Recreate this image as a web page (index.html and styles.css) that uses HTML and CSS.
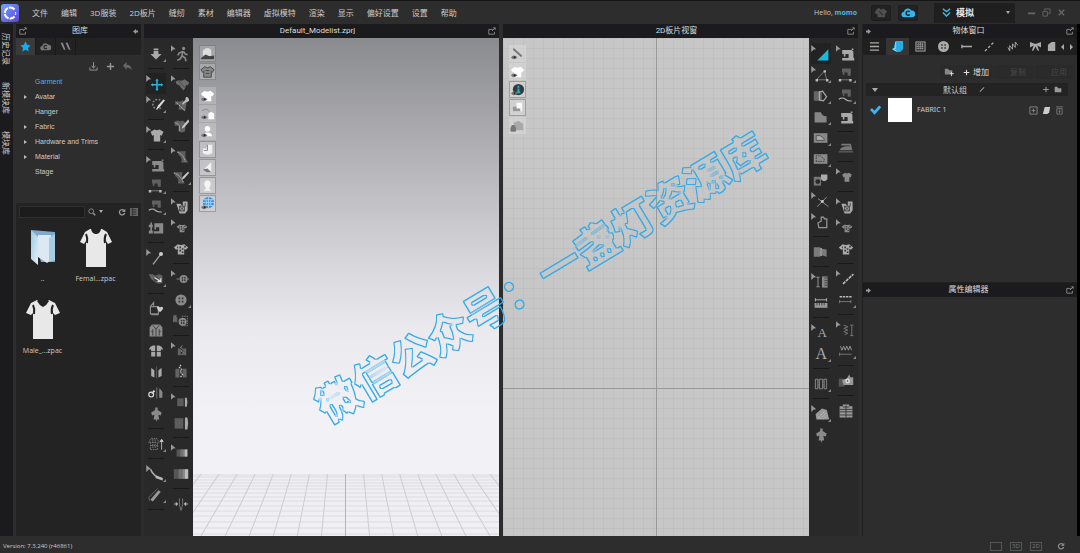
FILE: index.html
```html
<!DOCTYPE html>
<html lang="zh-CN">
<head>
  <meta charset="UTF-8" />
  <title>Default_Modelist.zprj</title>
  <link rel="stylesheet" href="styles.css">
</head>
<body>

<!-- shared icons -->
<svg class="sprite" aria-hidden="true">
  <symbol id="popout" viewBox="0 0 10 10"><path d="M6 3H1v6h7V6M5 5l4-4M6.500 1H9v2.500" fill="none" stroke="currentColor"/></symbol>
  <symbol id="arrow" viewBox="0 0 10 10"><path d="M0 3h4V0l6 5-6 5V7H0z" fill="currentColor"/></symbol>
  <symbol id="plus" viewBox="0 0 10 10"><path d="M5 1v8M1 5h8" stroke="currentColor" stroke-width="1.500"/></symbol>
  <symbol id="cloud" viewBox="0 0 20 16"><path d="M5 15a4 4 0 0 1-1-8 6 6 0 0 1 11-2 5 5 0 0 1 1 10z" fill="currentColor"/><path d="M12.500 7a3 3 0 1 0 0 4" fill="none" stroke="#222" stroke-width="2"/></symbol>
  <symbol id="refresh" viewBox="0 0 12 12"><path d="M9 3.500a4 4 0 1 0 1 4" fill="none" stroke="currentColor" stroke-width="2"/><path d="M11 1v5H6z" fill="currentColor"/></symbol>
  <symbol id="folder" viewBox="0 0 12 10"><path d="M1 1h4l1 2h5v6H1z" fill="currentColor"/></symbol>
  <symbol id="eye" viewBox="0 0 16 16"><path d="M1 12q3-4 7 0-4 4-7 0z" fill="#777"/><circle cx="5" cy="12" r="1" fill="#222"/></symbol>

  <symbol id="down" viewBox="0 0 20 20"><path d="M7 3h6v2H7zM7 6h6v4h4l-7 7-7-7h4z" fill="currentColor"/></symbol>
  <symbol id="walk" viewBox="0 0 20 20"><circle cx="12" cy="3" r="2" fill="currentColor"/><path d="M11 6l-1 6 4 3 1 4M10 12l-2 4-4 2M10 7L6 9l-1 3M12 7l2 3 3 1" fill="none" stroke="currentColor" stroke-width="2"/></symbol>
  <symbol id="move" viewBox="0 0 20 20"><path d="M10 5v12M4 11h12" stroke="#27b5dc" stroke-width="2"/><path d="M8 6l2-3 2 3zM8 16l2 3 2-3zM5 9l-3 2 3 2zM15 9l3 2-3 2z" fill="#27b5dc"/></symbol>
  <symbol id="lasso" viewBox="0 0 20 20"><path d="M14 4a6 6 0 1 0 2 8" fill="none" stroke="currentColor" stroke-width="2" stroke-dasharray="2 2"/><path d="M18 3l-7 8-2 5 4-3 7-9z" fill="#ddd"/></symbol>
  <symbol id="shirt" viewBox="0 0 20 20"><path d="M7 3q3 2 6 0l5 3-2 5-2-1v8H6v-8l-2 1-2-5z" fill="currentColor"/></symbol>
  <symbol id="heart" viewBox="0 0 20 20"><path d="M6 5q4 2 7-1l6 4-2 4-2-1q0 4-3 7-3-2-5-6l-4-2-1-3z" fill="currentColor" opacity=".7"/><path d="M4 4l12 13" stroke="#282828" stroke-dasharray="2 1"/></symbol>
  <symbol id="shirtpin" viewBox="0 0 20 20"><path d="M5 5q4 2 7-1l5 4-2 10q-3-3-8-2l1-6-6-1z" fill="currentColor" opacity=".6"/><path d="M3 6l12 11" stroke="#ccc" stroke-dasharray="2 1"/><path d="M19 1l-7 8M17 1l3 3-4 2z" stroke="#bbb" stroke-width="2" fill="#bbb"/></symbol>
  <symbol id="shirtpen" viewBox="0 0 20 20"><path d="M1 5l5-2q3 2 6 0l4 3-1 11q-4 2-8 0V9L3 10z" fill="currentColor" opacity=".6"/><path d="M3 6q7 2 5 10" fill="none" stroke="#aaa"/><path d="M19 2l-7 8-1 3 3-1 7-8z" fill="#c5c5c5"/></symbol>
  <symbol id="sew" viewBox="0 0 20 20"><path d="M4 5h12l2 2v8h1v3H4v-3h8v-5H8v3H6v-3H4zM16 3h2v2h-2z" fill="currentColor"/></symbol>
  <symbol id="sewseg" viewBox="0 0 20 20"><path d="M5 2h11v9h-4V7H8v3H6V7H5z" fill="#606060"/><path d="M3 16h13" stroke="currentColor"/><path d="M1 15h3v3H1zM14 15h3v3h-3z" fill="#bbb"/></symbol>
  <symbol id="sewfree" viewBox="0 0 20 20"><path d="M5 2h11v9h-4V7H8v3H6V7H5z" fill="#606060"/><path d="M1 14q5-3 8 0t8 2" fill="none" stroke="#bbb" stroke-width="1.500"/></symbol>
  <symbol id="sewmulti" viewBox="0 0 20 20"><path d="M8 4h11v13H7v-3h7V9h-4v3H8zM1 6h5v3H1zM1 13h5v4H1zM3 3h2v14H3z" fill="currentColor"/></symbol>
  <symbol id="pin" viewBox="0 0 20 20"><path d="M5 18L15 5" stroke="#aaa" stroke-width="1.500"/><circle cx="15" cy="5" r="2.500" fill="#ccc"/></symbol>
  <symbol id="drag" viewBox="0 0 20 20"><path d="M1 4h5l3 2 5-2 4 2v9l-5 1-4-2-5-4z" fill="currentColor" opacity=".6"/><circle cx="10" cy="10" r="3" fill="#444"/><path d="M8 8l8 5M16 9v4h-4" stroke="#ddd" fill="none" stroke-width="1.500"/></symbol>
  <symbol id="unfold" viewBox="0 0 20 20"><path d="M3 7h10v9H3zM3 7l4-5v4M4 17h9" fill="none" stroke="currentColor" stroke-width="1.500"/><path d="M11 8q2-2 4 0 3-2 4 1-1 3-4 5-3-2-4-6z" fill="#ccc"/></symbol>
  <symbol id="vest" viewBox="0 0 20 20"><path d="M5 3h10l3 4v11H2V7z" fill="currentColor"/><path d="M6 4l4 5 4-5M6 9v8M10 9v9M14 9v8M4 12h2M14 12h2" stroke="#333" fill="none"/></symbol>
  <symbol id="pieces" viewBox="0 0 20 20"><path d="M6 3h3v7H4V8H1q1-4 5-5zM11 3h3q4 1 5 5h-3v2h-5zM4 11h5v6H4zM11 11h5v6h-5z" fill="#a8a8a8"/></symbol>
  <symbol id="panels" viewBox="0 0 20 20"><path d="M4 5q2 1 4 3v9l-4-2zM17 5q-2 1-4 3v9l4-2z" fill="#aaa"/><path d="M10.500 3v15" stroke="#666"/></symbol>
  <symbol id="mirror" viewBox="0 0 20 20"><path d="M14 4q3 2 4 5v7h-4z" fill="#888"/><path d="M11 3v14" stroke="#888"/><circle cx="4" cy="12" r="3" fill="none" stroke="#ddd" stroke-width="1.500"/><path d="M4 12l3-6 2 2z" fill="#ddd"/></symbol>
  <symbol id="dress" viewBox="0 0 20 20"><path d="M9 2h3v3l5 3-1 4-3-1 1 6h-3v2h-1v-2H7l1-6-3 1-1-4 5-3z" fill="currentColor"/></symbol>
  <symbol id="coat" viewBox="0 0 20 20"><path d="M4 3h7l3 5-2 1v8H3v-8L1 8zM6 4v12M9 4v12M2 8h10M4 12h8" fill="none" stroke="currentColor" stroke-dasharray="2 1"/><path d="M17 5v12M15 7l2-3 2 3z" stroke="#ccc" fill="#ccc"/></symbol>
  <symbol id="curve" viewBox="0 0 20 20"><path d="M2 4q3 9 15 12" fill="none" stroke="#aaa" stroke-width="2"/><path d="M9 12l8 3v3l-9-3z" fill="#bbb"/></symbol>
  <symbol id="tape" viewBox="0 0 20 20"><path d="M3 16L13 4l3 2L6 18z" fill="#999"/><path d="M2 17l-1-4L12 2" fill="none" stroke="#777"/></symbol>
  <symbol id="bend" viewBox="0 0 20 20"><path d="M4 4h11q-3 7 3 14H9q2-6-3-9z" fill="currentColor" opacity=".55"/><path d="M4 5q8 3 10 12" stroke="#ccc" fill="none" stroke-dasharray="2 1"/></symbol>
  <symbol id="bendpen" viewBox="0 0 20 20"><path d="M1 4h11q-3 7 3 14H6q2-6-3-9z" fill="currentColor" opacity=".55"/><path d="M1 5q9 3 12 12" stroke="#ccc" fill="none" stroke-dasharray="2 1"/><path d="M19 3l-7 7-1 3 3-1 6-7z" fill="#ccc"/></symbol>
  <symbol id="texture" viewBox="0 0 20 20"><path d="M3 6h5l3 3V3h6v11l-3 4H7z" fill="currentColor"/><path d="M7 9h6v6H7zM7 9l6 6M13 9l-6 6M14 5v4" stroke="#333" fill="none"/></symbol>
  <symbol id="print" viewBox="0 0 20 20"><path d="M6 4q4 2 8 0l5 4-3 3-2-1v7H6v-7l-2 1-3-3z" fill="currentColor"/><path d="M8 7h2v2H8zM11 9h2v2h-2zM8 11h2v2H8zM11 13h2v2h-2zM5 7h1v2H5zM14 6h2v2h-2z" fill="#333"/></symbol>
  <symbol id="button" viewBox="0 0 20 20"><circle cx="10" cy="10" r="7" fill="currentColor"/><path d="M7 7h2v2H7zM11 7h2v2h-2zM7 11h2v2H7zM11 11h2v2h-2z" fill="#333"/></symbol>
  <symbol id="buttonline" viewBox="0 0 20 20"><path d="M3 10h16" stroke="currentColor"/><circle cx="12" cy="10" r="5" fill="currentColor"/><path d="M10 8h1v1h-1zM13 8h1v1h-1zM10 11h1v1h-1zM13 11h1v1h-1z" stroke="#333" fill="#333"/></symbol>
  <symbol id="buttonlock" viewBox="0 0 20 20"><path d="M0 6h5v5H0zM1 6V3h3v3" fill="#666" stroke="#666"/><path d="M11 4h7v12h-7" fill="none" stroke="currentColor" stroke-dasharray="2 1"/><circle cx="12" cy="11" r="5" fill="currentColor"/><path d="M10 9h1v1h-1zM13 9h1v1h-1zM10 12h1v1h-1zM13 12h1v1h-1z" stroke="#333"/></symbol>
  <symbol id="zip" viewBox="0 0 20 20"><path d="M3 6h5v11H3zM12 6h5v11h-5z" fill="currentColor" opacity=".6"/><path d="M10 1l-2 3 3 3-2 3 3 3-3 4" stroke="#ccc" fill="none" stroke-width="1.500" stroke-dasharray="2 1"/></symbol>
  <symbol id="roll" viewBox="0 0 20 20"><path d="M2 4h11v13H2z" fill="#5c5c5c"/><path d="M13 4h2v13h-2z" fill="#333"/><path d="M15 3h3q2 7 0 15h-3z" fill="#aaa"/></symbol>
  <symbol id="flat" viewBox="0 0 20 20"><path d="M1 4h18v12H1z" fill="#565656"/><path d="M7 4h5v12H7z" fill="#707070"/><path d="M12 4h3v12h-3z" fill="#8a8a8a"/><path d="M15 4h4v12h-4z" fill="#bbb"/></symbol>
  <symbol id="gather" viewBox="0 0 20 20"><path d="M1 10h4M19 10h-4M4 8l2 2-2 2zM16 8l-2 2 2 2z" fill="#bbb" stroke="#bbb"/><path d="M8 3v8l2 7 2-7V3" fill="none" stroke="#888"/></symbol>
  <symbol id="tri" viewBox="0 0 20 20"><path d="M18 4v14H4z" fill="#17b9dc"/></symbol>
  <symbol id="edit" viewBox="0 0 20 20"><path d="M3 16h13L13 5z" fill="none" stroke="#888"/><path d="M2 15h3v3H2zM15 15h3v3h-3zM12 4h3v3h-3z" fill="#bbb"/></symbol>
  <symbol id="polygon" viewBox="0 0 20 20"><path d="M1 4h10v12H1z" fill="#666"/><path d="M8 15V5l4-1 5 7-4 5z" fill="none" stroke="#aaa" stroke-width="1.500"/></symbol>
  <symbol id="shape" viewBox="0 0 20 20"><path d="M2 4h8q1 5 7 5v8H2z" fill="#858585"/></symbol>
  <symbol id="dart" viewBox="0 0 20 20"><path d="M1 4h17v12H1z" fill="#888"/><path d="M4 13V7h5l5 4v2z" fill="#aaa" stroke="#444"/></symbol>
  <symbol id="inner" viewBox="0 0 20 20"><path d="M1 4h17v12H1z" fill="#8a8a8a"/><path d="M4 13V6h5l5 4v3z" fill="none" stroke="#333" stroke-dasharray="2 1"/></symbol>
  <symbol id="trace" viewBox="0 0 20 20"><path d="M1 6h9v11H1z" fill="#777"/><circle cx="6" cy="12" r="3" fill="#292929"/><path d="M10 3h8v6q-4 5-8 0z" fill="#aaa"/></symbol>
  <symbol id="cross" viewBox="0 0 20 20"><path d="M4 17L16 5M5 7l13 10" stroke="#aaa"/><path d="M9 9h3v3H9z" fill="#ddd"/></symbol>
  <symbol id="outline" viewBox="0 0 20 20"><path d="M6 17l-1-6 4-2V4h3l1 2h3v11z" fill="none" stroke="#999" stroke-width="1.500"/></symbol>
  <symbol id="seam" viewBox="0 0 20 20"><path d="M1 4h8v12H1zM11 6l6 1v9l-6-2z" fill="#7b7b7b"/><path d="M9 5h2v10H9z" fill="#aaa"/></symbol>
  <symbol id="rulerv" viewBox="0 0 20 20"><path d="M5 4v12M3 4h4M3 16h4" stroke="#aaa"/><path d="M10 3h7v14h-7z" fill="#888"/><path d="M13 5h4M13 8h4M13 11h4M13 14h4" stroke="#333"/></symbol>
  <symbol id="rulerh" viewBox="0 0 20 20"><path d="M3 6h14M3 4v4M17 4v4" stroke="#ccc"/><path d="M2 10h16v6H2z" fill="#999"/><path d="M5 10v3M8 10v3M11 10v3M14 10v3" stroke="#333"/></symbol>
  <symbol id="stitch" viewBox="0 0 20 20"><path d="M5 16L18 4" stroke="#bbb" stroke-width="2" stroke-dasharray="4 1"/></symbol>
  <symbol id="stitchh" viewBox="0 0 20 20"><path d="M2 6h16" stroke="#bbb" stroke-width="2" stroke-dasharray="3 1"/><path d="M2 12h14M2 10v4M16 10v4" stroke="#888"/></symbol>
  <symbol id="zigv" viewBox="0 0 20 20"><path d="M6 4l5 2-5 2 5 2-5 2 5 2-4 2M16 4v13M14 4h4M14 17h4" fill="none" stroke="#888"/></symbol>
  <symbol id="zigh" viewBox="0 0 20 20"><path d="M3 4l2 5 2-5 2 5 2-5 2 5 2-5 2 5" fill="none" stroke="#aaa"/><path d="M2 14h15M2 12v4" stroke="#888"/></symbol>
  <symbol id="pleat" viewBox="0 0 20 20"><path d="M3 4h3v12H3zM14 4h3v12h-3zM8 4h4v12H8z" fill="none" stroke="#999"/><path d="M7 4v12M13 4v12" stroke="#777" stroke-dasharray="2 1"/></symbol>
  <symbol id="iron" viewBox="0 0 20 20"><path d="M4 6h12l2 8H2q1-4 8-5h5l-1-1H4z" fill="#777"/><path d="M1 16h18" stroke="#555" stroke-width="2"/></symbol>
  <symbol id="photo" viewBox="0 0 20 20"><path d="M1 7h7v10H1z" fill="#555"/><path d="M5 9l6-2 3-5 2 4 3-1v10H7z" fill="#999"/><circle cx="12" cy="10" r="3" fill="#ddd"/><circle cx="12" cy="10" r="1" fill="#333"/></symbol>
  <symbol id="grading" viewBox="0 0 20 20"><path d="M6 2h8v2h4v14H2V4h4z" fill="#999"/><path d="M10 3v15M2 8h16M2 11h16M2 15h16M6 5h8" stroke="#292929"/></symbol>
  <symbol id="mesh" viewBox="0 0 20 20"><path d="M2 10l8-7 6 2 3 12H3z" fill="#999"/><path d="M5 15l9-9M8 16l8-8M12 16l5-4" stroke="#eee" stroke-dasharray="1 2"/></symbol>
</svg>

<header class="menubar">
  <svg class="logo" viewBox="0 0 18 18"><defs><linearGradient id="lg" x2="1" y2="1"><stop stop-color="#72a6ff"/><stop offset="1" stop-color="#5d43d4"/></linearGradient></defs><rect width="18" height="18" rx="3" fill="url(#lg)"/><path d="M13.500 5.500a5.500 5.500 0 1 0 0 7" fill="none" stroke="#fff" stroke-width="2" stroke-dasharray="6 1"/><path d="M14 8l1 1-1 2" fill="none" stroke="#fff"/></svg>
  <nav class="menu">
    <a href="#">文件</a><a href="#">编辑</a><a href="#">3D服装</a><a href="#">2D板片</a><a href="#">缝纫</a><a href="#">素材</a><a href="#">编辑器</a><a href="#">虚拟模特</a><a href="#">渲染</a><a href="#">显示</a><a href="#">偏好设置</a><a href="#">设置</a><a href="#">帮助</a>
  </nav>
  <span class="hello">Hello, <a href="#">momo</a></span>
  <button class="top-btn dim" aria-label="商店"><svg viewBox="0 0 20 16"><path d="M3 4l4-3 3 3 4-2 5 5-3 3v5H5v-4L1 9z" fill="currentColor"/><path d="M7 6l6 6" stroke="#333" stroke-width="2"/></svg></button>
  <button class="top-btn cloud" aria-label="云"><svg><use href="#cloud"/></svg></button>
  <div class="simulate">
    <button class="sim-main"><svg viewBox="0 0 10 10"><path d="M1 1l4 3 4-3M1 5l4 4 4-4" fill="none" stroke="#3fb9f0" stroke-width="1.500"/></svg>模拟</button>
    <button class="sim-more" aria-label="模拟选项"><i class="caret"></i></button>
  </div>
  <div class="win-btns">
    <button aria-label="最小化"><svg viewBox="0 0 10 10"><path d="M1 6h8" stroke="currentColor" stroke-width="2"/></svg></button>
    <button aria-label="还原"><svg viewBox="0 0 10 10"><path d="M3 3V1h6v5H7M1 4h5v5H1z" fill="none" stroke="currentColor"/></svg></button>
    <button aria-label="关闭"><svg viewBox="0 0 10 10"><path d="M2 2l6 6M8 2L2 8" stroke="currentColor" stroke-width="1.500"/></svg></button>
  </div>
</header>

<main class="workspace">
  <nav class="side-tabs"><a href="#">历史记录</a><a href="#">新模块库</a><a href="#">模块库</a></nav>

  <aside class="library">
    <div class="title-bar"><svg><use href="#popout"/></svg><h2>图库</h2><svg class="flip"><use href="#arrow"/></svg></div>
    <div class="lib-tabs">
      <button class="active" aria-label="收藏"><svg viewBox="0 0 20 20"><path d="M10 1l3 6 6 1-4.500 4.500L16 19l-6-3-6 3 1.500-6.500L1 8l6-1z" fill="#10aef2"/></svg></button>
      <button aria-label="云素材"><svg><use href="#cloud"/></svg></button>
      <button aria-label="商城"><svg viewBox="0 0 20 20"><path d="M1 3h4l5 13H7zM10 3h4l5 13h-3z" fill="#888"/></svg></button>
    </div>
    <div class="lib-tools">
      <button aria-label="下载"><svg viewBox="0 0 10 10"><path d="M1 6v3h8V6M5 0v6M3 4l2 3 2-3" fill="none" stroke="currentColor"/></svg></button>
      <button aria-label="添加"><svg><use href="#plus"/></svg></button>
      <button class="dim" aria-label="返回"><svg viewBox="0 0 10 10"><path d="M0 4l4-4v3q5 0 6 6-2-3-6-3v3z" fill="currentColor"/></svg></button>
    </div>
    <ul class="tree">
      <li class="current"><a href="#">Garment</a></li>
      <li class="parent"><a href="#">Avatar</a></li>
      <li><a href="#">Hanger</a></li>
      <li class="parent"><a href="#">Fabric</a></li>
      <li class="parent"><a href="#">Hardware and Trims</a></li>
      <li class="parent"><a href="#">Material</a></li>
      <li><a href="#">Stage</a></li>
    </ul>
    <div class="browser">
      <div class="search">
        <input type="text" aria-label="搜索">
        <button aria-label="搜索"><svg viewBox="0 0 10 10"><path d="M6.500 6.500L9 9" stroke="currentColor" stroke-width="2"/><circle cx="4" cy="4" r="3" fill="none" stroke="currentColor"/></svg><i class="caret"></i></button>
        <button class="reload" aria-label="刷新"><svg><use href="#refresh"/></svg></button>
        <button aria-label="列表"><svg viewBox="0 0 10 10"><path d="M0 0h10v10H0z" fill="#666"/><path d="M2 2h6M2 4h6M2 6h6M2 8h6M3 0v10" stroke="#333"/></svg></button>
      </div>
      <div class="files">
        <a href="#"><svg viewBox="0 0 36 42"><defs><linearGradient id="fg" x2="1" y2="1"><stop stop-color="#9ccbe8"/><stop offset="1" stop-color="#e3f0f8"/></linearGradient></defs><path d="M6 4l24 2v30H16z" fill="#7fa9cd"/><path d="M13 9h13v25l-4 3-9-6z" fill="#dce9f2"/><path d="M6 4l7 7v28L6 33z" fill="url(#fg)"/><path d="M24 12l6-4v26l-6 2z" fill="#a5cde6"/></svg><span>..</span></a>
        <a href="#"><svg viewBox="0 0 36 42"><path d="M12 3h12l5 3 5 10-4 2-2-3v26H8V15l-2 3-4-2 5-10z" fill="#e8e8e8"/><path d="M13 3q1-2 5-2t5 2q-1 5-5 5t-5-5z" fill="#222"/><path d="M8 8q2 4 1 9M28 8q-2 4-1 9" stroke="#222" stroke-width="2" fill="none"/></svg><span>Femal...zpac</span></a>
        <a href="#"><svg viewBox="0 0 36 42"><path d="M12 2h12l6 3 5 10-5 2-2-2v26H8V15l-2 2-5-2 5-10z" fill="#e8e8e8"/><path d="M12 3q1-2 6-2t6 2q-2 4-6 6-4-2-6-6z" fill="#222"/><path d="M8 7q2 4 1 9M28 7q-2 4-1 9" stroke="#222" stroke-width="2" fill="none"/></svg><span>Male_...zpac</span></a>
      </div>
    </div>
  </aside>

  <section class="window">
    <div class="title-bar"><h2>Default_Modelist.zprj</h2><svg><use href="#popout"/></svg></div>
    <div class="window-body">
      <div class="tools">
        <div class="tool-col">
          <button class="more" aria-label="模拟"><svg class="bright"><use href="#down"/></svg></button><hr>
          <button class="pick on" aria-label="选择移动"><svg><use href="#move"/></svg></button>
          <button class="pick more" aria-label="选择网格"><svg><use href="#lasso"/></svg></button><hr>
          <button class="pick more" aria-label="折叠安排"><svg class="bright"><use href="#shirt"/></svg></button><hr>
          <button class="pick" aria-label="编辑缝纫线"><svg><use href="#sew"/></svg></button>
          <button class="more" aria-label="线缝纫"><svg><use href="#sewseg"/></svg></button>
          <button class="more" aria-label="自由缝纫"><svg><use href="#sewfree"/></svg></button>
          <button aria-label="多段缝纫"><svg><use href="#sewmulti"/></svg></button><hr>
          <button class="pick" aria-label="固定针"><svg><use href="#pin"/></svg></button>
          <button class="more" aria-label="假缝"><svg><use href="#drag"/></svg></button><hr>
          <button aria-label="展开"><svg><use href="#unfold"/></svg></button>
          <button aria-label="重置安排"><svg><use href="#vest"/></svg></button>
          <button aria-label="板片"><svg><use href="#pieces"/></svg></button>
          <button aria-label="对称"><svg><use href="#panels"/></svg></button>
          <button aria-label="镜像"><svg><use href="#mirror"/></svg></button>
          <button aria-label="着装"><svg><use href="#dress"/></svg></button><hr>
          <button class="more" aria-label="提高服装品质"><svg><use href="#coat"/></svg></button><hr>
          <button class="pick more" aria-label="曲线测量"><svg><use href="#curve"/></svg></button>
          <button class="more" aria-label="胶带"><svg><use href="#tape"/></svg></button><hr>
        </div>
        <div class="tool-col">
          <button class="pick" aria-label="姿势"><svg><use href="#walk"/></svg></button><hr>
          <button class="pick" aria-label="编辑造型线"><svg><use href="#heart"/></svg></button>
          <button aria-label="造型线"><svg><use href="#shirtpin"/></svg></button>
          <button aria-label="画笔"><svg><use href="#shirtpen"/></svg></button><hr>
          <button class="pick" aria-label="编辑线段"><svg><use href="#bend"/></svg></button>
          <button class="more" aria-label="线段"><svg><use href="#bendpen"/></svg></button><hr>
          <button class="pick" aria-label="编辑纹理"><svg class="bright"><use href="#texture"/></svg></button>
          <button class="pick" aria-label="调整贴图"><svg class="small"><use href="#print"/></svg></button>
          <button aria-label="贴图"><svg class="bright"><use href="#print"/></svg></button><hr>
          <button class="pick" aria-label="移动纽扣"><svg><use href="#buttonline"/></svg></button>
          <button class="more" aria-label="纽扣"><svg><use href="#button"/></svg></button>
          <button aria-label="系纽扣"><svg><use href="#buttonlock"/></svg></button><hr>
          <button class="pick" aria-label="编辑拉链"><svg class="small"><use href="#zip"/></svg></button>
          <button aria-label="拉链"><svg><use href="#zip"/></svg></button><hr>
          <button class="pick" aria-label="编辑嵌条"><svg class="small"><use href="#roll"/></svg></button>
          <button aria-label="嵌条"><svg><use href="#roll"/></svg></button><hr>
          <button class="pick" aria-label="编辑滚边"><svg class="small"><use href="#flat"/></svg></button>
          <button aria-label="滚边"><svg><use href="#flat"/></svg></button><hr>
          <button aria-label="抽褶"><svg><use href="#gather"/></svg></button>
        </div>
      </div>
      <div class="view view-3d">
        <svg class="floor" viewBox="0 0 305 62" preserveAspectRatio="none">
          <path d="M0 1h305M0 3h305M0 6h305M0 9h305M0 12h305M0 15h305M0 19h305M0 23h305M0 27h305M0 32h305M0 37h305M0 42h305M0 48h305M0 54h305M0 60h305" stroke="#dcdce0"/>
          <path d="M8 0L-40 62M26 0L-16 62M44 0L8 62M62 0L32 62M80 0L56 62M98 0L80 62M116 0L104 62M134 0L128 62M170 0L176 62M188 0L200 62M206 0L224 62M224 0L248 62M242 0L272 62M260 0L296 62M278 0L320 62M296 0L344 62" stroke="#cdcdd1" fill="none"/>
          <path d="M152 0v62" stroke="#b5b5b8"/>
        </svg>
        <div class="view-btns">
          <button class="framed" aria-label="显示场景"><svg viewBox="0 0 16 16"><path d="M3 10V5q2-3 5-3t4 3v6z" fill="#ddd"/><path d="M1 13l5-4 4 2 5-1v4H1z" fill="#444"/></svg></button>
          <button class="framed gap" aria-label="显示服装"><svg viewBox="0 0 16 16"><path d="M5 3q3 2 6 0l4 3-2 3-1-1v6H4V8L3 9 1 6z" fill="#888" stroke="#444"/><path d="M6 7h4M6 10h4" stroke="#444"/></svg></button>
          <button aria-label="服装"><svg viewBox="0 0 16 16"><path d="M5 3q3 2 6 0l4 3-2 3-1-1v6H4V8L3 9 1 6z" fill="#fff"/><use href="#eye" width="16" height="16"/></svg></button>
          <button aria-label="附件"><svg viewBox="0 0 16 16"><path d="M2 5l5-2 3 3" stroke="#888" fill="none"/><path d="M9 8l3-2 3 2v6H9z" fill="#fff"/><use href="#eye" width="16" height="16"/></svg></button>
          <button aria-label="虚拟模特"><svg viewBox="0 0 16 16"><circle cx="8" cy="5" r="3" fill="#fff"/><path d="M4 13q0-4 4-4t5 4z" fill="#fff"/><use href="#eye" width="16" height="16"/></svg></button>
          <button class="framed" aria-label="板片"><svg viewBox="0 0 16 16"><path d="M3 7h4l1-4h5v9q-5 3-10 0z" fill="#f1f1f1"/><path d="M8 3v6H4" fill="none" stroke="#888"/></svg></button>
          <button class="framed" aria-label="厚度"><svg viewBox="0 0 16 16"><path d="M5 9l7-7v11H6z" fill="#f2f2f2"/><path d="M3 10l5-1 4 4H7z" fill="#777"/></svg></button>
          <button class="framed" aria-label="头部"><svg viewBox="0 0 16 16"><path d="M4 6q0-4 4-4t4 4q0 3-2 5l3 3H3l3-3q-2-2-2-5z" fill="#f4f4f4" stroke="#ccc"/></svg></button>
          <button class="framed" aria-label="环境"><svg viewBox="0 0 16 16"><circle cx="9" cy="7" r="6" fill="#3f8fdc"/><path d="M3 7h12M9 1v12M5 3q4 4 0 8M13 3q-4 4 0 8M4 4h10M4 10h10" stroke="#9fd4fa" fill="none"/><use href="#eye" width="16" height="16"/></svg></button>
        </div>
      </div>
    </div>
  </section>

  <section class="window">
    <div class="title-bar"><h2>2D板片视窗</h2><svg><use href="#popout"/></svg></div>
    <div class="window-body">
      <div class="view view-2d">
        <div class="view-btns">
          <button aria-label="线"><svg viewBox="0 0 16 16"><path d="M4 2l9 8-1 2-9-8z" fill="#777"/><use href="#eye" width="16" height="16"/></svg></button>
          <button aria-label="板片"><svg viewBox="0 0 16 16"><path d="M5 3q3 2 6 0l4 3-2 3-1-1v6H4V8L3 9 1 6z" fill="#fff"/><use href="#eye" width="16" height="16"/></svg></button>
          <button class="framed" aria-label="信息"><svg viewBox="0 0 16 16"><circle cx="9" cy="8" r="6" fill="#333b40"/><path d="M9 4v2M9 7v4M7 11h4" stroke="#19b8c6" stroke-width="2"/><use href="#eye" width="16" height="16"/></svg></button>
          <button class="framed" aria-label="纹理"><svg viewBox="0 0 16 16"><path d="M3 7h4V3h6v9H3z" fill="#fafafa"/><path d="M3 7h4v2h4v3H3z" fill="#999"/></svg></button>
          <button aria-label="锁定"><svg viewBox="0 0 16 16"><path d="M4 5l5-2 5 3v7H6z" fill="#aaa"/><path d="M1 10h5v4H1zM2 10V8h3v2" fill="#777" stroke="#777"/></svg></button>
        </div>
      </div>
      <div class="tools">
        <div class="tool-col">
          <button class="pick on" aria-label="调整板片"><svg><use href="#tri"/></svg></button>
          <button class="pick more" aria-label="编辑板片"><svg><use href="#edit"/></svg></button>
          <button class="more" aria-label="多边形"><svg><use href="#polygon"/></svg></button>
          <button class="more" aria-label="延展"><svg><use href="#shape"/></svg></button>
          <button class="more" aria-label="内部多边形"><svg><use href="#dart"/></svg></button>
          <button class="more" aria-label="基础线"><svg><use href="#inner"/></svg></button>
          <button aria-label="省"><svg><use href="#trace"/></svg></button>
          <button class="pick" aria-label="勾勒"><svg><use href="#cross"/></svg></button>
          <button class="pick" aria-label="轮廓"><svg><use href="#outline"/></svg></button><hr>
          <button aria-label="缝份"><svg><use href="#seam"/></svg></button><hr>
          <button class="pick" aria-label="编辑标尺"><svg><use href="#rulerv"/></svg></button>
          <button aria-label="标尺"><svg><use href="#rulerh"/></svg></button><hr>
          <button class="pick letter" aria-label="编辑注释">A</button>
          <button class="more letter big" aria-label="注释">A</button><hr>
          <button class="more" aria-label="褶裥"><svg><use href="#pleat"/></svg></button><hr>
          <button class="pick more" aria-label="绗缝"><svg><use href="#mesh"/></svg></button>
          <button aria-label="填充"><svg><use href="#dress"/></svg></button>
        </div>
        <div class="tool-col">
          <button class="pick" aria-label="编辑缝纫"><svg class="bright"><use href="#sew"/></svg></button>
          <button class="more" aria-label="线缝纫"><svg><use href="#sewseg"/></svg></button>
          <button class="more" aria-label="自由缝纫"><svg><use href="#sewfree"/></svg></button>
          <button aria-label="检查缝纫"><svg class="bright"><use href="#sew"/></svg></button><hr>
          <button aria-label="归拔"><svg><use href="#iron"/></svg></button><hr>
          <button class="pick" aria-label="编辑服装"><svg class="small"><use href="#shirt"/></svg></button><hr>
          <button class="pick" aria-label="编辑纹理"><svg class="bright"><use href="#texture"/></svg></button>
          <button class="pick" aria-label="调整贴图"><svg class="small"><use href="#print"/></svg></button>
          <button aria-label="贴图"><svg class="bright"><use href="#print"/></svg></button><hr>
          <button class="pick" aria-label="编辑明线"><svg><use href="#stitch"/></svg></button>
          <button class="more" aria-label="明线"><svg><use href="#stitchh"/></svg></button><hr>
          <button class="pick" aria-label="编辑缝纫褶皱"><svg><use href="#zigv"/></svg></button>
          <button class="more" aria-label="缝纫褶皱"><svg><use href="#zigh"/></svg></button><hr>
          <button aria-label="图片"><svg><use href="#photo"/></svg></button><hr>
          <button aria-label="放码"><svg><use href="#grading"/></svg></button>
        </div>
      </div>
    </div>
  </section>

  <aside class="props">
    <section class="objects">
      <div class="title-bar"><svg class="small-arrow"><use href="#arrow"/></svg><h2>物体窗口</h2><svg><use href="#popout"/></svg></div>
      <div class="obj-tabs">
        <button aria-label="场景"><svg viewBox="0 0 12 12"><path d="M1 2h10M1 6h10M1 10h10" stroke="currentColor" stroke-width="1.500"/></svg></button>
        <button class="active" aria-label="织物"><svg viewBox="0 0 12 12"><path d="M4 0h8v9l-3 3H5L0 9l2-2z" fill="#25aee5"/><path d="M4 1v7l-3 1 4 2" fill="none" stroke="#9be0ff"/></svg></button>
        <button aria-label="贴图"><svg viewBox="0 0 12 12"><rect x="1" y="1" width="10" height="10" fill="#333" stroke="#aaa"/><path d="M2 4h8M2 8h8M4 2v8M8 2v8M2 6h8M6 2v8" stroke="#bbb" stroke-dasharray="1 1"/></svg></button>
        <button aria-label="纽扣"><svg viewBox="3 3 14 14"><use href="#button" width="20" height="20"/></svg></button>
        <button aria-label="扣眼"><svg viewBox="0 0 12 12"><path d="M1 6h11M1 4v4" stroke="currentColor" stroke-width="1.500"/></svg></button>
        <button aria-label="明线"><svg viewBox="0 0 12 12"><path d="M1 11L11 1" stroke="currentColor" stroke-width="1.500" stroke-dasharray="3 2"/></svg></button>
        <button aria-label="褶皱"><svg viewBox="0 0 12 12"><path d="M1 7l2 4V5l3 4V3l3 4V1l3 4" fill="none" stroke="currentColor"/></svg></button>
        <button aria-label="蝴蝶结"><svg viewBox="0 0 12 12"><path d="M0 1l5 2h2l5-2v6L8 5l2 6-2-1-2-4-2 4-2 1 2-6-4 2z" fill="currentColor"/></svg></button>
        <button class="last" aria-label="嵌条"><svg viewBox="0 0 12 12"><path d="M1 4l4-3h4v10H1z" fill="currentColor"/></svg></button>
        <button class="step" aria-label="上一页"><i class="tri-left"></i></button>
        <button class="step" aria-label="下一页"><i class="tri-right"></i></button>
      </div>
      <div class="obj-tools">
        <button aria-label="打开"><svg viewBox="0 0 12 10"><path d="M1 1h4l1 2h4v5H1z" fill="#888"/><path d="M9 5v5M7 7h5" stroke="#ddd"/></svg></button>
        <button class="add"><svg><use href="#plus"/></svg>增加</button>
        <button class="off" disabled>复制</button>
        <button class="off" disabled>应用</button>
      </div>
      <div class="group">
        <i class="caret"></i>
        <h3>默认组</h3>
        <button aria-label="重命名"><svg viewBox="0 0 10 10"><path d="M2 8l6-6" stroke="currentColor" stroke-width="1.500"/></svg></button>
        <button class="push" aria-label="新建组"><svg><use href="#plus"/></svg></button>
        <button aria-label="文件夹"><svg><use href="#folder"/></svg></button>
      </div>
      <div class="fabric">
        <svg class="check" viewBox="0 0 12 10"><path d="M1 4l4 4 6-7" fill="none" stroke="#3bb5f0" stroke-width="3"/></svg>
        <span class="swatch"></span>
        <span class="name">FABRIC 1</span>
        <button aria-label="新增"><svg viewBox="0 0 10 10"><path d="M1 1h8v8H1zM5 3v4M3 5h4" fill="none" stroke="#888"/></svg></button>
        <button aria-label="应用织物"><svg viewBox="0 0 10 10"><path d="M3 1h6L8 7 6 9H1z" fill="#ccc"/></svg></button>
        <button aria-label="删除"><svg viewBox="0 0 10 10"><path d="M2 3h6v6H2zM1 1h8M5 4v4M4 6h2" fill="none" stroke="#777"/></svg></button>
      </div>
    </section>
    <section class="editor">
      <div class="title-bar"><svg class="small-arrow"><use href="#arrow"/></svg><h2>属性编辑器</h2><svg><use href="#popout"/></svg></div>
    </section>
  </aside>
</main>

<footer class="status">
  <span>Version: 7.3.240 (r46861)</span>
  <div class="layout-btns">
    <button aria-label="双窗口"></button><button>3D</button><button>2D</button>
    <button class="plain" aria-label="重置"><svg><use href="#refresh"/></svg></button>
  </div>
</footer>

<svg class="watermark" viewBox="0 0 1080 553">
  <defs>
    <filter id="hollow" x="0" y="0" width="1080" height="553" filterUnits="userSpaceOnUse" color-interpolation-filters="sRGB">
      <feMorphology in="SourceAlpha" operator="erode" radius="1" result="inside"/>
      <feComposite in="SourceGraphic" in2="inside" operator="out"/>
    </filter>
  </defs>
  <g filter="url(#hollow)"><text transform="translate(328 424) rotate(-31)">微信公众号<tspan class="colon">：</tspan>一盏灯资源库</text></g>
</svg>

</body>
</html>
```

FILE: styles.css
```css
* {
  box-sizing: border-box;
}

body {
  margin: 0;
  height: 100vh;
  display: flex;
  flex-direction: column;
  position: relative;
  overflow: hidden;
  background: #2d2d2d;
  color: #ccc;
  font-family: "Open Sans", "Noto Sans CJK SC", sans-serif;
  font-size: 7px;
  line-height: 12px;
}

button {
  display: flex;
  align-items: center;
  justify-content: center;
  padding: 0;
  border: none;
  background: none;
  color: #999;
  font: inherit;
}

a {
  color: inherit;
  text-decoration: none;
}

h2,
h3 {
  margin: 0;
  font-size: 8px;
  font-weight: normal;
}

svg {
  display: block;
  flex: none;
}

.sprite {
  position: absolute;
  width: 0;
  height: 0;
}

.caret {
  border: 2px solid transparent;
  border-top: 3px solid #aaa;
  border-bottom: none;
}

/* top bar */
.menubar {
  display: flex;
  align-items: center;
  flex: none;
  height: 24px;
  padding: 0 14px 0 1px;
  border-top: 1px solid #151515;
}

.logo {
  width: 18px;
  height: 18px;
}

.menu {
  display: flex;
  gap: 13px;
  margin-left: 13px;
  font-size: 8px;
}

.hello {
  margin-left: auto;
  margin-right: 14px;
}

.hello a {
  color: #4eb4e2;
  font-weight: bold;
}

.top-btn {
  width: 20px;
  height: 16px;
  margin-right: 7px;
  background: #222;
  border: 1px solid #1d1d1d;
  border-radius: 2px;
}

.top-btn svg {
  width: 14px;
  height: 11px;
}

.top-btn.dim {
  color: #505050;
}

.top-btn.cloud {
  color: #38b2ea;
}

.simulate {
  display: flex;
  width: 81px;
  height: 20px;
  margin: 0 12px 0 9px;
  background: #1f1f1f;
}

.sim-main {
  flex: 1;
  justify-content: flex-start;
  gap: 5px;
  padding-left: 8px;
  color: #eee;
  font-size: 9px;
  font-weight: bold;
}

.sim-main svg {
  width: 9px;
  height: 9px;
}

.sim-more {
  width: 14px;
}

.win-btns {
  display: flex;
  gap: 6px;
}

.win-btns button {
  color: #666;
}

.win-btns svg {
  width: 9px;
  height: 9px;
}

/* main area */
.workspace {
  flex: 1;
  display: flex;
  min-height: 0;
  padding-right: 3px;
  background: linear-gradient(#000, #000) right / 3px 100% no-repeat;
}

.side-tabs {
  display: flex;
  flex: none;
  gap: 17px;
  width: 13px;
  margin-right: 3px;
  padding-top: 9px;
  background: #1b1b1e;
  writing-mode: vertical-rl;
  text-orientation: sideways;
  font-size: 8px;
  line-height: 13px;
}

.title-bar {
  display: flex;
  align-items: center;
  flex: none;
  height: 14px;
  padding: 0 3px;
  background: #1b1b1d;
  color: #ddd;
}

.title-bar h2 {
  flex: 1;
  text-align: center;
  font-family: Roboto, "Noto Sans CJK SC", sans-serif;
}

.title-bar svg {
  width: 8px;
  height: 8px;
  color: #999;
}

.title-bar .flip,
.title-bar .small-arrow {
  width: 5px;
  height: 5px;
}

.title-bar .flip {
  transform: scaleX(-1);
}

/* library */
.library {
  display: flex;
  flex-direction: column;
  flex: none;
  width: 125px;
  margin-right: 3px;
}

.lib-tabs {
  display: flex;
  height: 17px;
  background: #222;
}

.lib-tabs button {
  width: 20px;
  border-right: 1px solid #1a1a1a;
  color: #777;
}

.lib-tabs .active {
  background: #3a3a3a;
}

.lib-tabs svg {
  width: 11px;
  height: 11px;
}

.lib-tools {
  display: flex;
  justify-content: flex-end;
  gap: 8px;
  height: 19px;
  padding: 4px 9px 0 0;
}

.lib-tools svg {
  width: 9px;
  height: 9px;
}

.lib-tools .dim {
  color: #666;
}

.tree {
  flex: none;
  height: 129px;
  margin: 0;
  padding: 0 0 0 8px;
  list-style: none;
  font-family: "Liberation Sans", Arial, sans-serif;
  line-height: 15px;
}

.tree li {
  display: flex;
  align-items: center;
}

.tree li::before {
  content: "";
  width: 3px;
  margin-right: 5px;
  border: 2px solid transparent;
  border-left-width: 3px;
  border-right: none;
}

.tree .parent::before {
  border-left-color: #bbb;
}

.tree .current {
  color: #4eb2de;
}

.browser {
  flex: 1;
  padding: 2px 0;
  background: #232323;
}

.search {
  display: flex;
  align-items: center;
  height: 13px;
  padding: 0 3px;
}

.search input {
  width: 66px;
  height: 12px;
  margin-right: 3px;
  padding: 0 2px;
  border: 1px solid #303030;
  background: #1c1c1c;
  color: #ccc;
  font: inherit;
}

.search button {
  gap: 3px;
}

.search .reload {
  margin: 0 4px 0 auto;
}

.search svg {
  width: 8px;
  height: 8px;
}

.files {
  display: grid;
  grid-template-columns: 53px 53px;
  grid-auto-rows: 72px;
  padding-top: 8px;
}

.files a {
  display: flex;
  flex-direction: column;
  align-items: center;
  gap: 5px;
}

.files svg {
  width: 36px;
  height: 42px;
}

/* 3D and 2D windows */
.window {
  flex: 1;
  display: flex;
  flex-direction: column;
  min-width: 0;
  margin-right: 4px;
}

.window-body {
  flex: 1;
  display: flex;
  min-height: 0;
}

.tools {
  display: flex;
  flex: none;
  width: 49px;
  padding-top: 5px;
  background: #292929;
}

.tool-col {
  flex: 1;
  display: flex;
  flex-direction: column;
  align-items: center;
}

.tool-col button {
  flex: none;
  position: relative;
  width: 20px;
  height: 21px;
  color: #8a8a8a;
}

.tool-col svg {
  width: 16px;
  height: 16px;
}

.tool-col .small {
  width: 12px;
  height: 12px;
}

.tool-col .bright {
  color: #aaa;
}

.tool-col hr {
  flex: none;
  width: 16px;
  height: 1px;
  margin: 4px 0;
  border: none;
  background: #191919;
}

.tool-col .on {
  background: #222;
}

.tool-col .pick {
  padding-left: 2px;
}

/* cursor mark of the edit tools */
.pick::before {
  content: "";
  position: absolute;
  left: 0;
  top: 2px;
  width: 5px;
  height: 7px;
  background: #999;
  clip-path: polygon(0 0, 100% 60%, 50% 65%, 0 100%);
}

/* corner mark of tools with a submenu */
.more::after {
  content: "";
  position: absolute;
  right: 0;
  bottom: 2px;
  border-left: 3px solid transparent;
  border-bottom: 3px solid #888;
}

.tool-col .letter {
  color: #aaa;
  font-family: "Liberation Serif", serif;
  font-size: 13px;
}

.tool-col .big {
  font-size: 16px;
}

.view {
  flex: 1;
  position: relative;
  padding: 7px 6px;
}

.view-3d {
  background: linear-gradient(#8a8b8f 0%, #b0b0b4 22%, #d2d2d7 43%, #e9e9ee 58%, #f1f1f6 75%);
}

.floor {
  position: absolute;
  left: 0;
  bottom: 0;
  width: 100%;
  height: 62px;
  background: #f0f0f4;
}

.view-2d {
  background:
    linear-gradient(#999, #999) center / 1px 100% no-repeat,
    linear-gradient(#999, #999) 0 calc(70% + 2px) / 100% 1px no-repeat,
    repeating-linear-gradient(90deg, rgba(0, 0, 0, 0.03) 0 1px, transparent 1px 10px),
    repeating-linear-gradient(rgba(0, 0, 0, 0.03) 0 1px, transparent 1px 10px),
    #c7c7c7;
}

.view-btns {
  display: flex;
  flex-direction: column;
  gap: 1px;
}

.view-btns button {
  width: 17px;
  height: 17px;
  background: rgba(255, 255, 255, 0.2);
}

.view-btns .framed {
  border: 1px solid rgba(80, 80, 80, 0.4);
}

.view-btns .gap {
  margin-bottom: 6px;
}

.view-btns svg {
  width: 15px;
  height: 15px;
}

/* right panels */
.props {
  display: flex;
  flex-direction: column;
  flex: none;
  width: 215px;
  border-left: 1px solid #202020;
}

.objects {
  height: 259px;
  border-bottom: 1px solid #202020;
}

.obj-tabs {
  display: flex;
  height: 17px;
  background: #1f1f1f;
}

.obj-tabs button {
  width: 23px;
  color: #aaa;
}

.obj-tabs .active {
  background: #353535;
}

.obj-tabs svg {
  width: 11px;
  height: 11px;
}

.obj-tabs .last {
  width: 11px;
}

.obj-tabs .step {
  width: 9px;
}

.tri-left,
.tri-right {
  border: 3px solid transparent;
}

.tri-left {
  border-right-color: #aaa;
  border-left: none;
}

.tri-right {
  border-left-color: #aaa;
  border-right: none;
}

.obj-tools {
  display: flex;
  justify-content: flex-end;
  gap: 1px;
  margin-top: 10px;
  padding-right: 2px;
  font-size: 8px;
}

.obj-tools button {
  height: 14px;
  padding: 0 4px;
  background: #2a2a2a;
}

.obj-tools .add {
  gap: 3px;
  width: 34px;
  color: #ddd;
}

.obj-tools .off {
  width: 40px;
  padding-left: 12px;
  color: #484848;
}

.obj-tools svg {
  width: 10px;
  height: 10px;
}

.obj-tools .add svg {
  width: 7px;
  height: 7px;
}

.group {
  display: flex;
  align-items: center;
  height: 13px;
  margin: 4px 9px 0 3px;
  padding: 0 6px;
  background: #232323;
}

.group .caret {
  border-width: 4px 3px 0;
}

.group h3 {
  margin: 0 11px 0 65px;
}

.group .push {
  margin: 0 4px 0 auto;
}

.group svg {
  width: 8px;
  height: 7px;
}

.fabric {
  display: flex;
  align-items: center;
  gap: 4px;
  margin-top: 2px;
  padding: 0 13px 0 7px;
}

.check {
  width: 11px;
  height: 10px;
}

.swatch {
  width: 24px;
  height: 24px;
  margin: 0 1px 0 3px;
  background: #fff;
}

.name {
  margin-right: auto;
  font-family: "Noto Sans", sans-serif;
}

.fabric button svg {
  width: 9px;
  height: 9px;
}

.editor {
  flex: 1;
}

/* status bar */
.status {
  display: flex;
  align-items: center;
  justify-content: space-between;
  flex: none;
  height: 17px;
  padding: 3px 13px 0 3px;
  font-size: 6px;
}

.layout-btns {
  display: flex;
  gap: 8px;
}

.layout-btns button {
  width: 12px;
  height: 9px;
  border: 1px solid #555;
  color: #777;
  line-height: 7px;
}

.layout-btns .plain {
  margin-left: 5px;
  border: none;
  color: #888;
}

.layout-btns svg {
  width: 8px;
  height: 8px;
}

.watermark {
  position: absolute;
  inset: 0;
  width: 100%;
  height: 100%;
  pointer-events: none;
}

.watermark text {
  fill: #32a9e8;
  stroke: #32a9e8;
  stroke-width: 2px;
  stroke-linejoin: round;
  font-family: "Noto Sans CJK SC", sans-serif;
  font-size: 43px;
  font-weight: bold;
}

.watermark .colon {
  font-family: "Noto Sans CJK TC", sans-serif;
}
```
